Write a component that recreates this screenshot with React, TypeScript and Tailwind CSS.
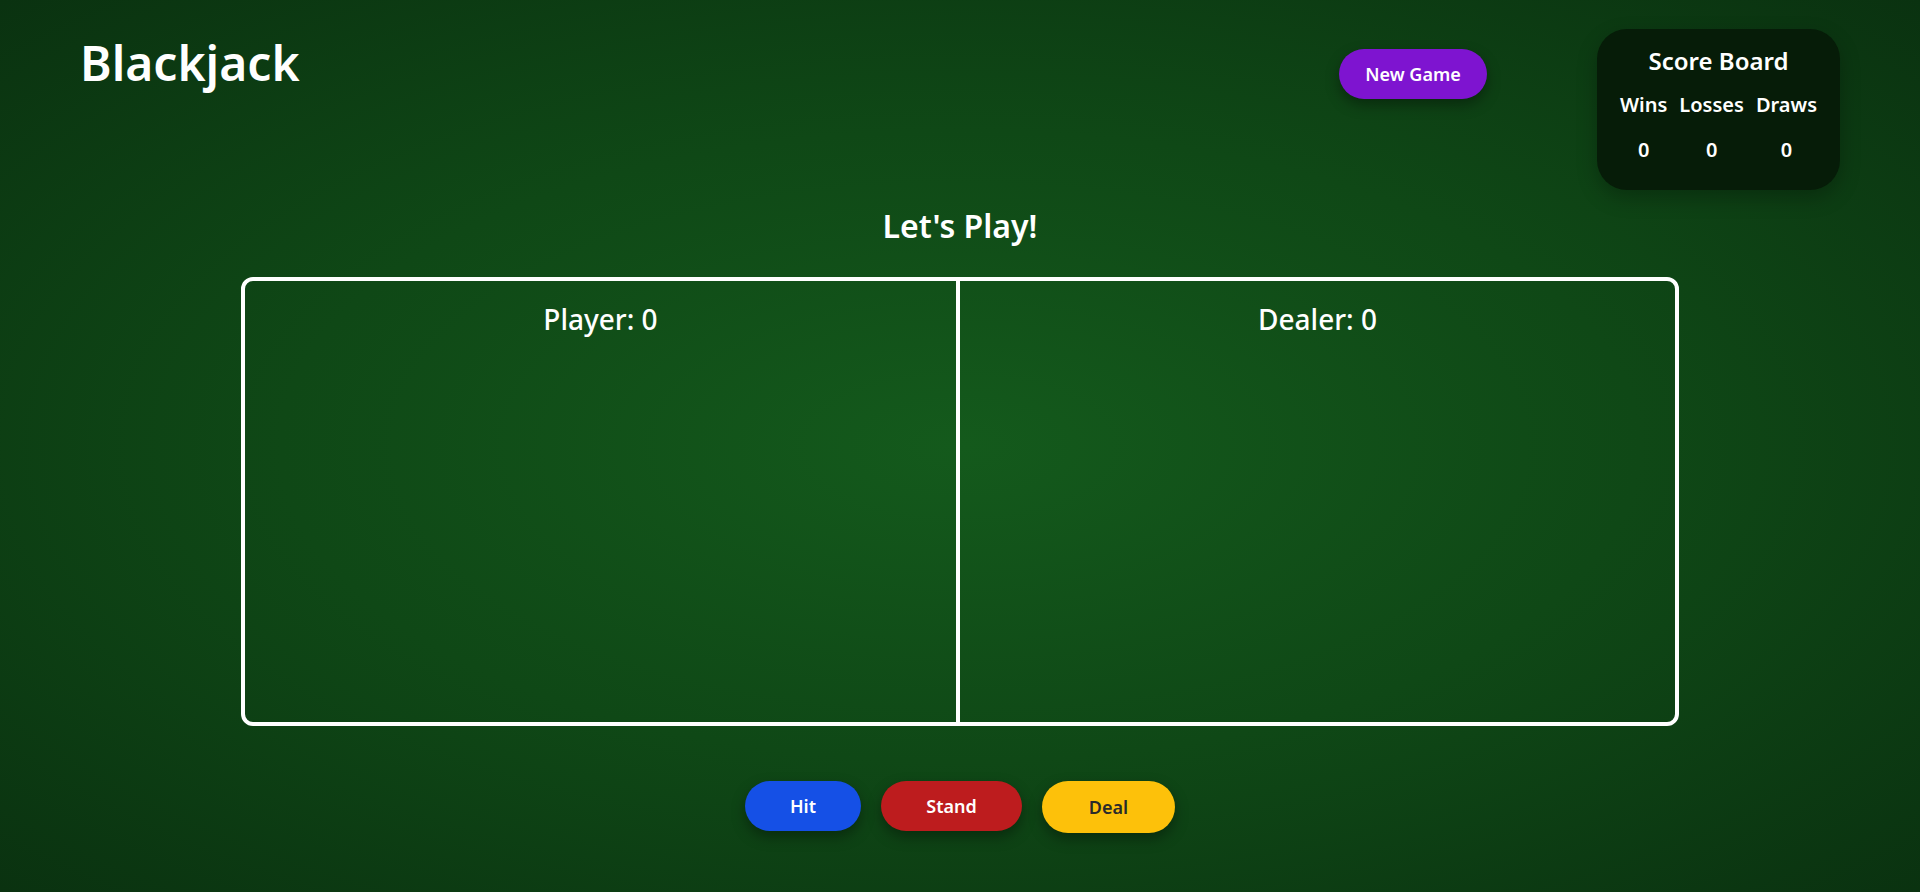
import type { ReactNode } from "react";

type ActionButtonProps = {
  children: ReactNode;
  className: string;
};

function ActionButton({ children, className }: ActionButtonProps) {
  return (
    <button
      type="button"
      className={
        "h-[50px] rounded-full text-[18px] font-semibold shadow-[0_6px_14px_rgba(0,0,0,0.35)] " +
        className
      }
    >
      {children}
    </button>
  );
}

function ScoreBoard() {
  return (
    <div className="rounded-[30px] bg-[#061c08] px-[17px] pb-[26px] pt-[17px] text-white shadow-[0_8px_20px_rgba(0,0,0,0.25)]">
      <h2 className="text-center text-[24px] font-semibold leading-[30px]">Score Board</h2>
      <table className="mt-[15px] text-[20px] font-semibold leading-[28px]">
        <thead>
          <tr>
            <th className="px-[6px] pb-[17px] font-semibold">Wins</th>
            <th className="px-[6px] pb-[17px] font-semibold">Losses</th>
            <th className="px-[6px] pb-[17px] font-semibold">Draws</th>
          </tr>
        </thead>
        <tbody>
          <tr>
            <td className="px-[6px] text-center">0</td>
            <td className="px-[6px] text-center">0</td>
            <td className="px-[6px] text-center">0</td>
          </tr>
        </tbody>
      </table>
    </div>
  );
}

export default function App() {
  return (
    <div
      className="min-h-[892px] w-full bg-[radial-gradient(ellipse_at_center,#145a1c_0%,#0f4816_50%,#0a3210_100%)] text-white"
      style={{ fontFamily: '"Noto Sans", "Open Sans", sans-serif' }}
    >
      <header className="flex items-start px-20 pt-[29px]">
        <h1 className="mt-[2px] text-[48px] font-semibold leading-[64px]">Blackjack</h1>
        <div className="flex-1" />
        <button
          type="button"
          className="mr-[110px] mt-[20px] h-[50px] w-[148px] rounded-full bg-[#7e14d0] text-[18px] font-semibold text-white shadow-[0_6px_14px_rgba(0,0,0,0.35)]"
        >
          New Game
        </button>
        <ScoreBoard />
      </header>

      <main className="flex flex-col items-center">
        <h2 className="mt-[16px] text-[32px] font-semibold leading-[40px]">Let&apos;s Play!</h2>

        <div className="mt-[31px] grid h-[449px] w-[1438px] grid-cols-2 rounded-[12px] border-[4px] border-white">
          <section className="border-r-[4px] border-white pt-[18px] text-center">
            <h3 className="text-[28px] font-medium leading-[40px]">Player: 0</h3>
          </section>
          <section className="pt-[18px] text-center">
            <h3 className="text-[28px] font-medium leading-[40px]">Dealer: 0</h3>
          </section>
        </div>

        <div className="mt-[55px] flex gap-5">
          <ActionButton className="w-[116px] bg-[#1550e6] text-white">Hit</ActionButton>
          <ActionButton className="w-[141px] bg-[#bd1c1e] text-white">Stand</ActionButton>
          <ActionButton className="h-[52px] w-[133px] bg-[#fdc10a] text-[#2a2a2a]">Deal</ActionButton>
        </div>
      </main>
    </div>
  );
}
